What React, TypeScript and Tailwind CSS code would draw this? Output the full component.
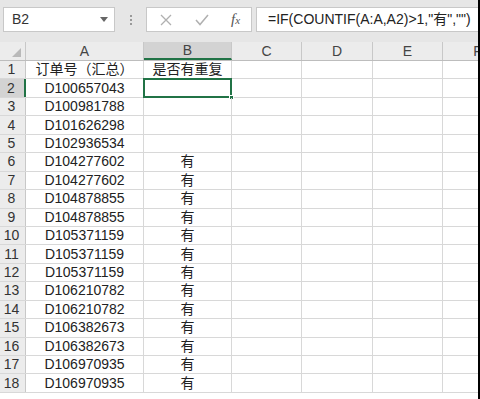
import React from "react";

const rows: [string, string, string][] = [
  ["1", "订单号（汇总）", "是否有重复"],
  ["2", "D100657043", ""],
  ["3", "D100981788", ""],
  ["4", "D101626298", ""],
  ["5", "D102936534", ""],
  ["6", "D104277602", "有"],
  ["7", "D104277602", "有"],
  ["8", "D104878855", "有"],
  ["9", "D104878855", "有"],
  ["10", "D105371159", "有"],
  ["11", "D105371159", "有"],
  ["12", "D105371159", "有"],
  ["13", "D106210782", "有"],
  ["14", "D106210782", "有"],
  ["15", "D106382673", "有"],
  ["16", "D106382673", "有"],
  ["17", "D106970935", "有"],
  ["18", "D106970935", "有"],
];

const cols = ["A", "B", "C", "D", "E", "F"];
const widths = ["w-[118px]", "w-[88px]", "w-[70px]", "w-[71px]", "w-[70px]", "w-[70px]"];

export default function App() {
  return (
    <div
      className="w-[480px] h-[399px] overflow-hidden bg-black flex text-[#222]"
      style={{ fontFamily: '"Liberation Sans", "Noto Sans CJK SC", sans-serif' }}
    >
      <div className="w-[478px] shrink-0 h-full bg-white flex flex-col overflow-hidden">
        {/* toolbar */}
        <div className="h-[42px] shrink-0 bg-[#e6e6e6] flex items-start pt-[7px] pl-[3px]">
          <div className="w-[112px] shrink-0 h-[25px] bg-white border border-[#c8c8c8] flex items-center justify-between pl-[8px] pr-[6px]">
            <span className="text-[14px] text-[#333]">B2</span>
            <svg width="8" height="5" viewBox="0 0 8 5"><path d="M0 0 L8 0 L4 5 Z" fill="#666" /></svg>
          </div>
          <div className="w-[31px] shrink-0 h-[25px] flex flex-col items-center justify-center gap-[2px]">
            <div className="w-[2px] h-[2px] bg-[#999]" />
            <div className="w-[2px] h-[2px] bg-[#999]" />
            <div className="w-[2px] h-[2px] bg-[#999]" />
          </div>
          <div className="w-[106px] shrink-0 h-[25px] bg-white border border-[#c8c8c8] flex items-center">
            <svg className="ml-[13px]" width="12" height="12" viewBox="0 0 12 12">
              <path d="M1 1 L11 11 M11 1 L1 11" stroke="#b0b0b0" strokeWidth="1.3" fill="none" />
            </svg>
            <svg className="ml-[23px]" width="14" height="12" viewBox="0 0 14 12">
              <path d="M1 6 L5 10.5 L13 1" stroke="#b0b0b0" strokeWidth="1.5" fill="none" />
            </svg>
            <span
              className="ml-[22px] text-[15px] italic text-[#555] leading-none"
              style={{ fontFamily: '"Liberation Serif", serif' }}
            >
              f<span className="text-[11px]">x</span>
            </span>
          </div>
          <div className="ml-[4px] flex-1 h-[25px] bg-white border border-[#c8c8c8] border-r-0 flex items-center pl-[11px]">
            <span className="text-[14px] text-[#222] whitespace-nowrap">=IF(COUNTIF(A:A,A2)&gt;1,"有","")</span>
          </div>
        </div>

        {/* column header */}
        <div className="h-[19px] shrink-0 flex bg-[#ececec] border-b border-[#bdbdbd]">
          <div className="w-[26px] shrink-0 h-full border-r border-[#c8c8c8] flex items-end justify-end pr-[4px] pb-[3px]">
            <svg width="9" height="9" viewBox="0 0 9 9"><path d="M9 0 L9 9 L0 9 Z" fill="#b9b9b9" /></svg>
          </div>
          {cols.map((c, i) => (
            <div
              key={c}
              className={`${widths[i]} shrink-0 h-full flex items-center justify-center text-[14px] text-[#444] border-r border-[#c8c8c8] ${
                c === "B" ? "bg-[#d3d3d3] border-b-2 border-b-[#217346]" : ""
              }`}
            >
              {c}
            </div>
          ))}
        </div>

        {/* rows */}
        {rows.map(([n, a, b]) => (
          <div key={n} className="h-[18.45px] shrink-0 flex border-b border-[#d8d8d8]">
            <div
              className={`w-[26px] shrink-0 h-full flex items-center justify-center pr-[2px] text-[14px] text-[#333] border-r ${
                n === "2" ? "bg-[#d3d3d3] border-r-2 border-r-[#217346]" : "bg-[#ececec] border-[#c8c8c8]"
              }`}
            >
              {n}
            </div>
            <div className="w-[118px] shrink-0 h-full flex items-center justify-center text-[14px] border-r border-[#d8d8d8] whitespace-nowrap">
              {a}
            </div>
            <div className="w-[88px] shrink-0 h-full relative flex items-center justify-center text-[14px] border-r border-[#d8d8d8] whitespace-nowrap">
              {b}
              {n === "2" && (
                <>
                  <div className="absolute left-[-1px] top-[-1px] right-[-1px] bottom-[-1px] border-2 border-[#217346]" />
                  <div className="absolute right-[-3px] bottom-[-3px] w-[5px] h-[5px] bg-[#217346] border border-white" />
                </>
              )}
            </div>
            <div className="w-[70px] shrink-0 h-full border-r border-[#d8d8d8]" />
            <div className="w-[71px] shrink-0 h-full border-r border-[#d8d8d8]" />
            <div className="w-[70px] shrink-0 h-full border-r border-[#d8d8d8]" />
            <div className="w-[70px] shrink-0 h-full" />
          </div>
        ))}
      </div>
    </div>
  );
}
